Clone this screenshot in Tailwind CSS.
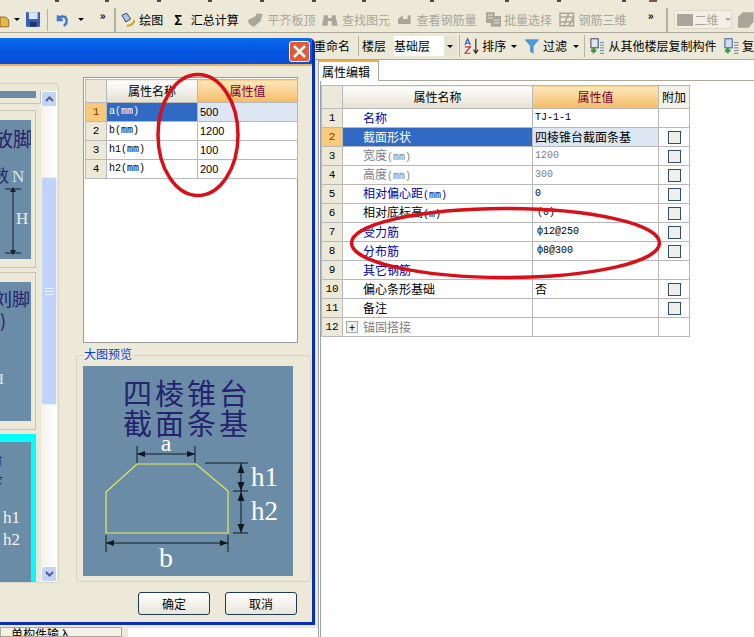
<!DOCTYPE html>
<html lang="zh">

<head>
    <meta charset="UTF-8">
    <title>属性编辑</title>
    <script src="https://cdn.jsdelivr.net/npm/@tailwindcss/browser@4"></script>
</head>

<body class="bg-[#ece9d8] font-['Noto_Sans_CJK_SC','Liberation_Sans',sans-serif] text-[12px] leading-none text-black">
    <div class="relative w-[754px] h-[637px] overflow-hidden flex flex-col">

        <!-- Bottom edge of the row above the toolbar -->
        <div class="h-[2px] shrink-0 flex [&>span]:w-[4px] [&>span]:bg-[#4a4a40]">
            <span class="ml-[55px]"></span>
            <span class="ml-[46px]"></span>
            <span class="ml-[48px]"></span>
            <span class="ml-[47px]"></span>
            <span class="ml-[48px]"></span>
            <span class="ml-[48px]"></span>
            <span class="ml-[46px]"></span>
            <span class="ml-[64px]"></span>
            <span class="ml-[71px]"></span>
            <span class="ml-[48px]"></span>
            <span class="ml-[61px]"></span>
            <span class="ml-[23px] !w-[8px] !bg-[#7a5a48]"></span>
        </div>

        <!-- Main toolbar -->
        <div class="h-[31px] shrink-0 border-b border-[#aca899] flex items-center pt-[5px] whitespace-nowrap">
            <svg class="w-[10px] h-[16px]" viewBox="0 0 10 16"><path d="M0 5h6l3 3v7H0z" fill="#e8b84a" stroke="#8a6a20" /></svg>
            <span class="w-0 h-0 ml-[4px] border-x-[3px] border-x-transparent border-t-[3px] border-t-black"></span>
            <svg class="w-[15px] h-[15px] ml-[6px]" viewBox="0 0 15 15"><rect width="15" height="15" fill="#3b5fb0" /><rect x="3" width="9" height="7" fill="#d8e4f8" /><rect x="4" y="10" width="7" height="5" fill="#20356f" /></svg>
            <span class="w-px h-[22px] bg-[#b5b29f] ml-[7px]"></span>
            <svg class="w-[14px] h-[14px] ml-[7px]" viewBox="0 0 14 14" fill="none"><path d="M3 2v5h5M3 7c2-5 9-5 9 1 0 2-1 4-3 5" stroke="#3f74d0" stroke-width="2.4" /></svg>
            <span class="w-0 h-0 ml-[9px] border-x-[3px] border-x-transparent border-t-[3px] border-t-black"></span>
            <span class="ml-[16px] text-[11px] font-bold mb-[8px]">»</span>
            <span class="w-[2px] h-[24px] border-x border-[#b5b29f] ml-[8px]"></span>
            <svg class="w-[16px] h-[16px] ml-[4px]" viewBox="0 0 16 16" fill="none"><path d="M2 3l5-2 4 6-5 3z" fill="#a9c3ea" stroke="#345" /><path d="M7 14c4 0 7-2 8-6" stroke="#d0a020" stroke-width="2" /></svg>
            <span class="ml-[4px] text-[12px]">绘图</span>
            <span class="ml-[11px] font-bold text-[13px] w-[10px]">Σ</span>
            <span class="ml-[7px]">汇总计算</span>
            <svg class="w-[16px] h-[14px] ml-[9px]" viewBox="0 0 16 14"><path d="M0 7l8-4 1-3 6 1-2 7-7 6-5-3z" fill="#a8a698" /></svg>
            <span class="ml-[4px] text-[#a8a698]">平齐板顶</span>
            <svg class="w-[16px] h-[14px] ml-[7px]" viewBox="0 0 16 14"><path d="M2 2h4v3h4V2h4l2 11H10V8H6v5H0z" fill="#a8a698" /></svg>
            <span class="ml-[4px] text-[#a8a698]">查找图元</span>
            <svg class="w-[13px] h-[10px] ml-[8px]" viewBox="0 0 13 10"><path d="M0 4l5-4v4h5V0h3v9H0z" fill="#a8a698" /></svg>
            <span class="ml-[6px] text-[#a8a698]">查看钢筋量</span>
            <svg class="w-[16px] h-[15px] ml-[9px]" viewBox="0 0 16 15"><path d="M0 0h9v4h7v11H5v-4H0z" fill="#a8a698" /><path d="M2 3h5M2 6h5M8 8h6M8 11h6" stroke="#ece9d8" /></svg>
            <span class="ml-[3px] text-[#a8a698]">批量选择</span>
            <svg class="w-[16px] h-[15px] ml-[7px]" viewBox="0 0 16 15" fill="none" stroke="#a8a698" stroke-width="1.5"><path d="M1 1h14v13H1zM1 5h14M1 10h14M5 14l5-13M10 14l5-9" /></svg>
            <span class="ml-[4px] text-[#a8a698]">钢筋三维</span>
            <span class="ml-[21px] text-[11px] font-bold mb-[8px]">»</span>
            <span class="w-[2px] h-[24px] border-x border-[#b5b29f] ml-[13px]"></span>
            <div class="ml-[6px] w-[59px] h-[19px] bg-[#f2f0e6] border border-[#dcd9c8] flex items-center pl-[2px]">
                <span class="w-[16px] h-[12px] bg-[#a8a698]"></span>
                <span class="ml-[1px] text-[#a8a698]">二维</span>
                <span class="ml-[7px] w-0 h-0 border-x-[3px] border-x-transparent border-t-[3px] border-t-[#a8a698]"></span>
            </div>
            <svg class="w-[16px] h-[16px] ml-[6px]" viewBox="0 0 16 16"><path d="M0 5l5-5h11v10l-5 6H0z" fill="#a8a698" /></svg>
        </div>

        <!-- Second toolbar -->
        <div class="h-[27px] shrink-0 border-b border-[#aca899] flex items-center whitespace-nowrap pl-[314px]">
            <span>重命名</span>
            <span class="w-px h-[20px] bg-[#b5b29f] ml-[8px]"></span>
            <span class="ml-[3px]">楼层</span>
            <div class="ml-[8px] w-[63px] h-[20px] flex items-center">
                <span class="w-[50px] h-full bg-white flex items-center">基础层</span>
                <span class="w-[13px] h-full bg-[#e6e3d2] flex items-center justify-center"><span class="w-0 h-0 border-x-[3px] border-x-transparent border-t-[3px] border-t-black"></span></span>
            </div>
            <span class="w-px h-[22px] bg-[#b5b29f] ml-[2px]"></span>
            <svg class="w-[17px] h-[18px] ml-[4px]" viewBox="0 0 17 18" fill="none"><path d="M1 8l3-7 3 7M2 6h4" stroke="#2f5fb5" stroke-width="1.3" /><path d="M1 10h6l-6 7h6" stroke="#b03030" stroke-width="1.3" /><path d="M13 1v15M10.500 13l2.500 4 2.500-4" stroke="#222" stroke-width="1.2" /></svg>
            <span class="ml-[3px]">排序</span>
            <span class="ml-[5px] w-0 h-0 border-x-[3px] border-x-transparent border-t-[3px] border-t-black"></span>
            <svg class="w-[15px] h-[15px] ml-[8px]" viewBox="0 0 15 15"><path d="M0 0h15L9 7v8l-3-2V7z" fill="#4d9bdd" stroke="#2a6aa8" stroke-width=".5" /></svg>
            <span class="ml-[4px]">过滤</span>
            <span class="ml-[6px] w-0 h-0 border-x-[3px] border-x-transparent border-t-[3px] border-t-black"></span>
            <span class="w-px h-[22px] bg-[#b5b29f] ml-[5px]"></span>
            <svg class="w-[16px] h-[17px] ml-[5px]" viewBox="0 0 16 17" fill="none"><rect x="1" y="0" width="8" height="10" fill="#dfe6f2" stroke="#334" /><path d="M1 13h6M4 10v6" stroke="#2f9a3a" stroke-width="2.500" /><path d="M11 4h5M11 7h5M11 10h5M11 13h5M11 16h5" stroke="#4a80b8" /></svg>
            <span class="ml-[4px]">从其他楼层复制构件</span>
            <svg class="w-[16px] h-[17px] ml-[8px]" viewBox="0 0 16 17" fill="none"><rect x="1" y="0" width="8" height="10" fill="#cfdcf2" stroke="#2a4f9a" /><path d="M1 13h6M4 10v6" stroke="#2f9a3a" stroke-width="2.500" /><path d="M11 4h5M11 7h5M11 10h5M11 13h5M11 16h5" stroke="#777" /></svg>
            <span class="ml-[3px]">复</span>
        </div>

        <!-- Work area -->
        <div class="flex-1 flex min-h-0">
            <!-- Left side hidden behind the dialog -->
            <div class="w-[128px] shrink-0 flex flex-col justify-end">
                <div class="w-[122px] h-[10px] bg-[#f4f2e8] border border-[#aca899] pl-[10px] overflow-hidden text-[12px]">单构件输入</div>
            </div>
            <div class="w-[190px] shrink-0 flex flex-col justify-end">
                <div class="h-[9px] bg-white"></div>
            </div>

            <!-- Property editor -->
            <div class="flex-1 bg-white border-l border-[#9aa3b5] flex flex-col min-w-0">
                <div class="h-[21px] border-b border-[#aca899] flex">
                    <div class="w-[60px] h-[21px] bg-white border-r border-[#aca899] border-t-2 border-t-[#f0b040] flex items-center pl-[3px] text-[12px]">属性编辑</div>
                </div>
                <div class="flex-1 ml-px border-l border-[#9aa3b5] pt-[4px]">
                    <table class="border-collapse table-fixed w-[368px] text-[12px]">
                        <colgroup><col class="w-[21px]"><col class="w-[190px]"><col class="w-[126px]"><col class="w-[31px]"></colgroup>
                        <thead>
                            <tr class="h-[23px]">
                                <th class="border border-[#b8b8b8] bg-[#ece9d8] font-normal"></th>
                                <th class="border border-[#b8b8b8] bg-linear-to-b from-white to-[#e4e1d0] font-normal">属性名称</th>
                                <th class="border border-[#b8b8b8] bg-linear-to-b from-[#fde8bd] to-[#f4bb63] text-[#7a0030] font-normal">属性值</th>
                                <th class="border border-[#b8b8b8] bg-[#f4f2e8] font-normal">附加</th>
                            </tr>
                        </thead>
                        <tbody class="[&_td]:border [&_td]:border-[#b8b8b8] [&_tr]:h-[19px]">
                            <tr>
                                <td class="bg-[#ece9d8] text-center font-['Liberation_Mono'] text-[11px]">1</td>
                                <td class="pl-[20px] text-[#0000b0]">名称</td>
                                <td class="pl-[2px] font-['Liberation_Mono'] text-[10px]">TJ-1-1</td>
                                <td></td>
                            </tr>
                            <tr>
                                <td class="bg-[#fbc97a] text-center text-[#7a4000] font-['Liberation_Mono'] text-[11px]">2</td>
                                <td class="pl-[20px] bg-[#316ac5] text-white">截面形状</td>
                                <td class="pl-[2px] bg-[#dde7f4]">四棱锥台截面条基</td>
                                <td><span class="block mx-auto w-[13px] h-[13px] border border-[#2f4f6f] bg-[#f0f0ea]"></span></td>
                            </tr>
                            <tr>
                                <td class="bg-[#ece9d8] text-center font-['Liberation_Mono'] text-[11px]">3</td>
                                <td class="pl-[20px] text-[#808080]">宽度<span class="font-['Liberation_Mono'] text-[10px]">(mm)</span></td>
                                <td class="pl-[2px] font-['Liberation_Mono'] text-[10px] text-[#808080]">1200</td>
                                <td><span class="block mx-auto w-[13px] h-[13px] border border-[#2f4f6f] bg-[#f0f0ea]"></span></td>
                            </tr>
                            <tr>
                                <td class="bg-[#ece9d8] text-center font-['Liberation_Mono'] text-[11px]">4</td>
                                <td class="pl-[20px] text-[#808080]">高度<span class="font-['Liberation_Mono'] text-[10px]">(mm)</span></td>
                                <td class="pl-[2px] font-['Liberation_Mono'] text-[10px] text-[#808080]">300</td>
                                <td><span class="block mx-auto w-[13px] h-[13px] border border-[#2f4f6f] bg-[#f0f0ea]"></span></td>
                            </tr>
                            <tr>
                                <td class="bg-[#ece9d8] text-center font-['Liberation_Mono'] text-[11px]">5</td>
                                <td class="pl-[20px] text-[#0000b0]">相对偏心距<span class="font-['Liberation_Mono'] text-[10px]">(mm)</span></td>
                                <td class="pl-[2px] font-['Liberation_Mono'] text-[10px]">0</td>
                                <td><span class="block mx-auto w-[13px] h-[13px] border border-[#2f4f6f] bg-[#f0f0ea]"></span></td>
                            </tr>
                            <tr>
                                <td class="bg-[#ece9d8] text-center font-['Liberation_Mono'] text-[11px]">6</td>
                                <td class="pl-[20px]">相对底标高<span class="font-['Liberation_Mono'] text-[10px]">(m)</span></td>
                                <td class="pl-[4px] font-['Liberation_Mono'] text-[10px]">(0)</td>
                                <td><span class="block mx-auto w-[13px] h-[13px] border border-[#2f4f6f] bg-[#f0f0ea]"></span></td>
                            </tr>
                            <tr>
                                <td class="bg-[#ece9d8] text-center font-['Liberation_Mono'] text-[11px]">7</td>
                                <td class="pl-[20px] text-[#0000b0]">受力筋</td>
                                <td class="pl-[4px] font-['Liberation_Mono'] text-[10px]">ф12@250</td>
                                <td><span class="block mx-auto w-[13px] h-[13px] border border-[#2f4f6f] bg-[#f0f0ea]"></span></td>
                            </tr>
                            <tr>
                                <td class="bg-[#ece9d8] text-center font-['Liberation_Mono'] text-[11px]">8</td>
                                <td class="pl-[20px] text-[#0000b0]">分布筋</td>
                                <td class="pl-[4px] font-['Liberation_Mono'] text-[10px]">ф8@300</td>
                                <td><span class="block mx-auto w-[13px] h-[13px] border border-[#2f4f6f] bg-[#f0f0ea]"></span></td>
                            </tr>
                            <tr>
                                <td class="bg-[#ece9d8] text-center font-['Liberation_Mono'] text-[11px]">9</td>
                                <td class="pl-[20px] text-[#0000b0]">其它钢筋</td>
                                <td></td>
                                <td></td>
                            </tr>
                            <tr>
                                <td class="bg-[#ece9d8] text-center font-['Liberation_Mono'] text-[11px]">10</td>
                                <td class="pl-[20px]">偏心条形基础</td>
                                <td class="pl-[2px]">否</td>
                                <td><span class="block mx-auto w-[13px] h-[13px] border border-[#2f4f6f] bg-[#f0f0ea]"></span></td>
                            </tr>
                            <tr>
                                <td class="bg-[#ece9d8] text-center font-['Liberation_Mono'] text-[11px]">11</td>
                                <td class="pl-[20px]">备注</td>
                                <td></td>
                                <td><span class="block mx-auto w-[13px] h-[13px] border border-[#2f4f6f] bg-[#f0f0ea]"></span></td>
                            </tr>
                            <tr>
                                <td class="bg-[#ece9d8] text-center font-['Liberation_Mono'] text-[11px]">12</td>
                                <td class="text-[#808080]">
                                    <div class="flex items-center pl-[3px]">
                                        <span class="w-[12px] h-[12px] border border-[#aaa] bg-[#f0f0ea] text-black flex items-center justify-center text-[11px]">+</span>
                                        <span class="ml-[5px]">锚固搭接</span>
                                    </div>
                                </td>
                                <td></td>
                                <td></td>
                            </tr>
                        </tbody>
                    </table>
                </div>
            </div>
        </div>

        <!-- Dialog window -->
        <div class="absolute left-0 top-[38px] w-[315px] h-[587px] rounded-tr-[6px] overflow-hidden bg-[#ece9d8] border-r-[3px] border-b-[3px] border-[#0a2fb5] flex flex-col">
            <div class="h-[28px] shrink-0 bg-linear-to-b from-[#0a6af0] via-[#0554e0] to-[#0a50d8] border-b-2 border-[#e8b060] flex items-center justify-end pr-[2px]">
                <span class="w-[21px] h-[21px] rounded-[3px] border border-white bg-[#df5a38] flex items-center justify-center">
                    <svg class="w-[13px] h-[13px]" viewBox="0 0 13 13"><path d="M1 1l11 11M12 1L1 12" stroke="#fff" stroke-width="2.500" /></svg>
                </span>
            </div>

            <div class="flex-1 flex min-h-0">
                <!-- Component type list -->
                <div class="w-[59px] h-[500px] mt-[17px] shrink-0 border border-l-0 border-[#d8d4c2] rounded-r-[4px] flex pt-[7px]">
                    <div class="w-[41px] flex flex-col h-[491px] overflow-hidden">
                        <div class="h-[13px] border-r border-b border-[#c8c5b2] pr-[4px] pb-[6px]"><div class="h-[7px] bg-[#6b8ca6]"></div></div>
                        <div class="h-[6px]"></div>
                        <div class="w-[36px] h-[158px] border-r border-y border-[#c8c5b2] pr-[4px] py-[9px]">
                            <svg class="block w-[31px] h-[139px] bg-[#6b8ca6]" viewBox="0 0 31 139">
                                <text x="-7" y="27" font-size="20" fill="#23236f" font-family="Noto Sans CJK SC">放脚</text>
                                <text x="-8" y="62" font-size="17" fill="#23236f" font-family="Noto Sans CJK SC">数</text>
                                <text x="12" y="62" font-size="17" fill="#d8e4ee" font-family="Liberation Serif">N</text>
                                <text x="16" y="104" font-size="17" fill="#e8f0f4" font-family="Liberation Serif">H</text>
                                <path d="M13 69v64M5 69h16M5 133h16" stroke="#14202c" fill="none" />
                                <path d="M13 67l-3 5h6zM13 135l-3-5h6z" fill="#14202c" />
                            </svg>
                        </div>
                        <div class="h-[4px]"></div>
                        <div class="w-[36px] h-[158px] border-r border-y border-[#c8c5b2] pr-[4px] py-[9px]">
                            <svg class="block w-[31px] h-[139px] bg-[#6b8ca6]" viewBox="0 0 31 139">
                                <text x="-6" y="24" font-size="18" fill="#23236f" font-family="Noto Sans CJK SC">刘脚</text>
                                <text x="0" y="46" font-size="18" fill="#23236f" font-family="Noto Sans CJK SC">)</text>
                                <text x="-7" y="102" font-size="15" fill="#e8f0f4" font-family="Liberation Serif">H</text>
                            </svg>
                        </div>
                        <div class="h-[4px]"></div>
                        <div class="w-[36px] flex-1 bg-[#0ff] pr-[4px] pt-[8px]">
                            <svg class="block w-[31px] h-[140px] bg-[#6b8ca6]" viewBox="0 0 31 140">
                                <text x="-11" y="22" font-size="14" fill="#23236f" font-family="Noto Sans CJK SC">台</text>
                                <text x="-11" y="41" font-size="14" fill="#23236f" font-family="Noto Sans CJK SC">条</text>
                                <text x="3" y="81" font-size="17" fill="#f0f4f8" font-family="Liberation Serif">h1</text>
                                <text x="3" y="103" font-size="17" fill="#f0f4f8" font-family="Liberation Serif">h2</text>
                            </svg>
                        </div>
                    </div>
                    <!-- Scrollbar -->
                    <div class="w-[16px] h-[491px] bg-linear-to-r from-[#f3f1ea] to-white flex flex-col">
                        <span class="h-[16px] bg-[#c3d4f8] border border-white rounded-[2px] flex items-center justify-center">
                            <svg class="w-[9px] h-[6px]" viewBox="0 0 9 6"><path d="M1 5l3.500-3.500L8 5" stroke="#4d6185" stroke-width="2" fill="none" /></svg>
                        </span>
                        <span class="mt-[70px] h-[228px] bg-[#c1d3fb] border border-[#e8eefc] rounded-[2px] flex items-center justify-center">
                            <svg class="w-[8px] h-[7px]" viewBox="0 0 8 7"><path d="M0 .5h8M0 3.500h8M0 6.500h8" stroke="#eef3ff" /></svg>
                        </span>
                        <span class="mt-auto h-[16px] bg-[#c3d4f8] border border-white rounded-[2px] flex items-center justify-center">
                            <svg class="w-[9px] h-[6px]" viewBox="0 0 9 6"><path d="M1 1l3.500 3.500L8 1" stroke="#4d6185" stroke-width="2" fill="none" /></svg>
                        </span>
                    </div>
                </div>

                <!-- Right column: parameters, preview, buttons -->
                <div class="flex-1 flex flex-col pl-[16px] min-w-0">
                    <div class="mt-[11px] ml-[8px] w-[215px] h-[266px] shrink-0 bg-white border border-[#9a9a9a] pt-px">
                        <table class="border-collapse table-fixed w-[212px] ml-px text-[12px]">
                            <colgroup><col class="w-[21px]"><col class="w-[91px]"><col class="w-[100px]"></colgroup>
                            <thead>
                                <tr class="h-[23px]">
                                    <th class="border border-[#b8b8b8] bg-[#ece9d8] font-normal"></th>
                                    <th class="border border-[#b8b8b8] bg-linear-to-b from-white to-[#e4e1d0] font-normal">属性名称</th>
                                    <th class="border border-[#b8b8b8] bg-linear-to-b from-[#fde8bd] to-[#f4bb63] text-[#7a0030] font-normal">属性值</th>
                                </tr>
                            </thead>
                            <tbody class="[&_td]:border [&_td]:border-[#b8b8b8] [&_tr]:h-[19px] font-['Liberation_Mono'] text-[10px]">
                                <tr>
                                    <td class="bg-[#fbc97a] text-center text-[#7a4000] text-[11px]">1</td>
                                    <td class="pl-[2px] bg-[#316ac5] text-white">a(mm)</td>
                                    <td class="pl-[2px] bg-[#dde7f4] font-['Liberation_Sans'] text-[11px]">500</td>
                                </tr>
                                <tr>
                                    <td class="bg-[#ece9d8] text-center text-[11px]">2</td>
                                    <td class="pl-[2px]">b(mm)</td>
                                    <td class="pl-[2px] font-['Liberation_Sans'] text-[11px]">1200</td>
                                </tr>
                                <tr>
                                    <td class="bg-[#ece9d8] text-center text-[11px]">3</td>
                                    <td class="pl-[2px]">h1(mm)</td>
                                    <td class="pl-[2px] font-['Liberation_Sans'] text-[11px]">100</td>
                                </tr>
                                <tr>
                                    <td class="bg-[#ece9d8] text-center text-[11px]">4</td>
                                    <td class="pl-[2px]">h2(mm)</td>
                                    <td class="pl-[2px] font-['Liberation_Sans'] text-[11px]">200</td>
                                </tr>
                            </tbody>
                        </table>
                    </div>

                    <!-- Preview group -->
                    <div class="relative mt-[12px] ml-px w-[235px] h-[227px] shrink-0 border border-[#d8d4c2] rounded-[4px] pl-[6px] pt-[10px]">
                        <span class="absolute left-[6px] top-[-8px] bg-[#ece9d8] text-[#0046d5] px-px">大图预览</span>
                        <svg class="block w-[210px] h-[210px] bg-[#6b8ca6]" viewBox="0 0 210 210">
                            <text x="104" y="39" text-anchor="middle" font-size="29" letter-spacing="3" fill="#23236f" font-family="Noto Sans CJK SC">四棱锥台</text>
                            <text x="104" y="69" text-anchor="middle" font-size="29" letter-spacing="3" fill="#23236f" font-family="Noto Sans CJK SC">截面条基</text>
                            <text x="83" y="85" text-anchor="middle" font-size="24" fill="#fff" font-family="Liberation Serif">a</text>
                            <text x="168" y="120" font-size="27" fill="#fff" font-family="Liberation Serif">h1</text>
                            <text x="168" y="154" font-size="27" fill="#fff" font-family="Liberation Serif">h2</text>
                            <text x="83" y="201" text-anchor="middle" font-size="28" fill="#fff" font-family="Liberation Serif">b</text>
                            <path d="M54 98H113L145 125V167H23V126Z" fill="none" stroke="#e6ea5a" stroke-width="1.200" />
                            <path d="M54 80V97M112 80V97M54 88H112M122 97H165M150 125H165M150 167H165M158 97V167M23 169V186M145 169V186M23 177H145" stroke="#10181f" fill="none" />
                            <path d="M54 88l8-3v6zM112 88l-8-3v6zM23 177l8-3v6zM145 177l-8-3v6zM158 98l-3.500 9h7zM158 125l-3.500-9h7zM158 126l-3.500 9h7zM158 167l-3.500-9h7z" fill="#10181f" />
                        </svg>
                    </div>

                    <!-- Buttons -->
                    <div class="mt-[10px] flex justify-end gap-[15px] w-[222px]">
                        <button class="w-[72px] h-[23px] rounded-[3px] border border-[#1f3a5a] bg-linear-to-b from-white to-[#e8e5d8] text-[12px]">确定</button>
                        <button class="w-[72px] h-[23px] rounded-[3px] border border-[#1f3a5a] bg-linear-to-b from-white to-[#e8e5d8] text-[12px]">取消</button>
                    </div>
                </div>
            </div>
        </div>

        <!-- Hand-drawn red annotation circles -->
        <svg class="absolute inset-0 w-[754px] h-[637px] pointer-events-none" viewBox="0 0 754 637" fill="none" stroke="#d8101a" stroke-width="3.500">
            <ellipse cx="198" cy="135" rx="40" ry="60.500" />
            <ellipse cx="505.500" cy="243" rx="154" ry="34.500" />
        </svg>
    </div>
</body>

</html>
